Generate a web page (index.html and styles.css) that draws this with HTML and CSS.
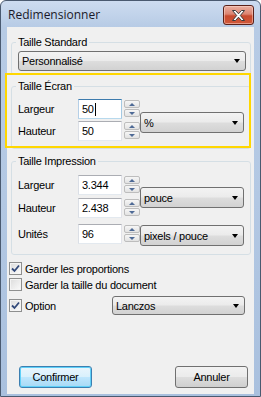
FILE: index.html
```html
<!DOCTYPE html>
<html lang="fr">
<head>
<meta charset="utf-8">
<title>Redimensionner</title>
<link rel="stylesheet" href="styles.css">
</head>
<body>
<div class="window">
  <div class="titlebar">
    <span class="title">Redimensionner</span>
    <div class="close">
      <svg width="13" height="11" viewBox="0 0 13 11"><polygon points="0.5,0.5 3.5,0.5 6.5,3.8 9.5,0.5 12.5,0.5 8.3,5.5 12.5,10.5 9.5,10.5 6.5,7.2 3.5,10.5 0.5,10.5 4.7,5.5" fill="#fff" stroke="#3b3b3b" stroke-width="1" stroke-linejoin="round"/></svg>
    </div>
  </div>
  <div class="client">
    <fieldset class="group g1">
      <legend>Taille Standard</legend>
      <div class="combo wide"><span>Personnalisé</span><i class="arrow"></i></div>
    </fieldset>

    <div class="hl-wrap">
      <fieldset class="group g2">
        <legend>Taille Écran</legend>
        <div class="grid grid2">
          <span class="lbl">Largeur</span>
          <div class="field focus">50<span class="caret"></span></div>
          <div class="spin"><b><i class="up"></i></b><b><i class="down"></i></b></div>
          <div class="combo unit u-pct"><span>%</span><i class="arrow"></i></div>
          <span class="lbl">Hauteur</span>
          <div class="field">50</div>
          <div class="spin"><b><i class="up"></i></b><b><i class="down"></i></b></div>
        </div>
      </fieldset>
      <div class="highlight"></div>
    </div>

    <fieldset class="group g3">
      <legend>Taille Impression</legend>
      <div class="grid grid3">
        <span class="lbl r1">Largeur</span>
        <div class="field r1">3.344</div>
        <div class="spin r1"><b><i class="up"></i></b><b><i class="down"></i></b></div>
        <div class="combo unit u-pouce"><span>pouce</span><i class="arrow"></i></div>
        <span class="lbl r2">Hauteur</span>
        <div class="field r2">2.438</div>
        <div class="spin r2"><b><i class="up"></i></b><b><i class="down"></i></b></div>
        <span class="lbl r3">Unités</span>
        <div class="field r3">96</div>
        <div class="spin r3"><b><i class="up"></i></b><b><i class="down"></i></b></div>
        <div class="combo unit u-ppi"><span>pixels / pouce</span><i class="arrow"></i></div>
      </div>
    </fieldset>

    <div class="checks">
      <div class="chk-row">
        <span class="box checked"><svg width="9" height="9" viewBox="0 0 9 9"><path d="M1 4.5 L3.5 7 L8 1.5" fill="none" stroke="#32497a" stroke-width="1.8"/></svg></span>
        <span>Garder les proportions</span>
      </div>
      <div class="chk-row">
        <span class="box"></span>
        <span>Garder la taille du document</span>
      </div>
      <div class="chk-row opt">
        <span class="box checked"><svg width="9" height="9" viewBox="0 0 9 9"><path d="M1 4.5 L3.5 7 L8 1.5" fill="none" stroke="#32497a" stroke-width="1.8"/></svg></span>
        <span class="opt-lbl">Option</span>
        <div class="combo lanczos"><span>Lanczos</span><i class="arrow"></i></div>
      </div>
    </div>

    <div class="buttons">
      <div class="btn default">Confirmer</div>
      <div class="btn">Annuler</div>
    </div>
  </div>
</div>
</body>
</html>
```

FILE: styles.css
```css
html, body {
  margin: 0;
  padding: 0;
  background: #ffffff;
}
body {
  font-family: "Liberation Sans", Arial, sans-serif;
  font-size: 11px;
  letter-spacing: -0.25px;
  color: #000;
}
.window {
  width: 261px;
  height: 397px;
  box-sizing: border-box;
  border: 1px solid #4a5a70;
  border-radius: 6px 6px 0 0;
  background: linear-gradient(#cddcf0, #b7cbe5 26px, #b3c8e3 200px, #a9c0de);
  display: flex;
  flex-direction: column;
  overflow: hidden;
}
.titlebar {
  height: 26px;
  flex: none;
  display: flex;
  justify-content: space-between;
  align-items: flex-start;
  padding: 0 6px 0 7px;
}
.title {
  font-family: "Open Sans", sans-serif;
  font-size: 12px;
  letter-spacing: 0;
  line-height: 16px;
  margin-top: 6px;
  color: #1a1a2a;
}
.close {
  margin-top: 4px;
  width: 31px;
  height: 20px;
  box-sizing: border-box;
  border: 1px solid #5a2119;
  border-radius: 3px;
  background: linear-gradient(#eab0a2, #dc8470 45%, #c84a2e 55%, #d0583a);
  box-shadow: inset 0 0 0 1px rgba(255, 220, 210, 0.5);
  display: flex;
  align-items: center;
  justify-content: center;
}
.close svg { display: block; }

.client {
  flex: 1;
  margin: 0 6px 2px 6px;
  background: #f0f0f0;
  padding: 0 3px 6px 4px;
  display: flex;
  flex-direction: column;
  border-left: 0;
}

.group {
  margin: 0;
  padding: 0 4px 3px 6px;
  border: 1px solid #d5dfe5;
  border-radius: 3px;
  min-width: 0;
  box-shadow: inset 0 0 0 0 #fff;
}
.group legend {
  padding: 0 2px;
  margin-left: -2px;
  line-height: 13px;
}
.g1 { margin-top: 9px; padding-top: 2px; padding-bottom: 3px; }
.hl-wrap { position: relative; margin-top: 5px; }
.g2 { padding-top: 6px; padding-bottom: 7px; }
.g3 { margin-top: 6px; padding-top: 7px; padding-bottom: 10px; }

.highlight {
  position: absolute;
  left: -6px;
  top: -7px;
  right: 0;
  bottom: 1px;
  border: 2px solid #ffd700;
  pointer-events: none;
}

.combo {
  box-sizing: border-box;
  height: 20px;
  border: 1px solid #707070;
  border-radius: 3px;
  background: linear-gradient(#f3f3f3, #ebebeb 48%, #dddddd 52%, #d2d2d2);
  display: flex;
  align-items: center;
  padding-left: 3px;
}
.combo .arrow {
  margin-left: auto;
  margin-right: 5px;
  width: 0;
  height: 0;
  border-top: 4px solid #000;
  border-left: 3.5px solid transparent;
  border-right: 3.5px solid transparent;
}
.wide { width: 228px; }

.grid {
  display: grid;
  grid-template-columns: 60px 45px 17px 104px;
  column-gap: 0;
}
.grid .field { margin-right: 1px; }
.grid .spin { margin-left: 1px; }
.grid2 { grid-template-rows: 20px 20px; row-gap: 2px; }
.grid2 .lbl, .grid2 .field, .grid2 .spin { grid-column: auto; }
.u-pct { grid-column: 4; grid-row: 1 / 3; align-self: start; margin-top: 13px; height: 21px; }

.grid3 { grid-template-rows: 20px 20px 20px; row-gap: 3px 6px; }
.grid3 { grid-template-rows: 20px 3px 20px 6px 20px; row-gap: 0; }
.grid3 .r1 { grid-row: 1; }
.grid3 .r2 { grid-row: 3; }
.grid3 .r3 { grid-row: 5; }
.u-pouce { grid-column: 4; grid-row: 1 / 4; align-self: start; margin-top: 12px; height: 21px; }
.u-ppi { grid-column: 4; grid-row: 5; align-self: start; margin-top: 1px; height: 21px; }

.lbl { display: flex; align-items: center; }

.field {
  box-sizing: border-box;
  height: 20px;
  background: #fff;
  border: 1px solid;
  border-color: #abadb3 #e2e3ea #e3e9ef #dbdfe6;
  padding-left: 3px;
  display: flex;
  align-items: center;
}
.field.focus {
  border-color: #3d7bad #a4c9e3 #b7d9ed #b5cfe7;
}
.caret {
  width: 1px;
  height: 13px;
  background: #000;
  margin-left: 1px;
}

.spin {
  display: flex;
  flex-direction: column;
  gap: 1px;
  padding: 1px 0 2px;
  box-sizing: border-box;
  height: 20px;
}
.spin b {
  flex: 1;
  box-sizing: border-box;
  border: 1px solid #bdbdbd;
  border-radius: 2px;
  background: linear-gradient(#f6f6f6, #e2e2e2);
  display: flex;
  align-items: center;
  justify-content: center;
}
.spin i {
  width: 0;
  height: 0;
  border-left: 3px solid transparent;
  border-right: 3px solid transparent;
}
.spin i.up { border-bottom: 3px solid #4e6a96; }
.spin i.down { border-top: 3px solid #4e6a96; }

.checks {
  margin-top: 7px;
  margin-left: -2px;
  display: flex;
  flex-direction: column;
  gap: 3px;
}
.chk-row {
  display: flex;
  align-items: center;
  height: 13px;
  gap: 3px;
}
.chk-row.opt {
  height: 19px;
  margin-top: 2px;
  align-items: center;
}
.box {
  width: 13px;
  height: 13px;
  box-sizing: border-box;
  border: 1px solid #8e8f8f;
  background: linear-gradient(135deg, #dcdcdc, #fbfbfb);
  box-shadow: inset 0 0 0 1px #f4f4f4;
  display: flex;
  align-items: center;
  justify-content: center;
  flex: none;
}
.box svg { display: block; }
.opt-lbl { width: 84px; }
.lanczos { width: 133px; height: 19px; }

.buttons {
  margin-top: auto;
  display: flex;
  justify-content: space-between;
  padding: 0 3px 0 8px;
}
.btn {
  width: 73px;
  height: 22px;
  box-sizing: border-box;
  border: 1px solid #707070;
  border-radius: 3px;
  background: linear-gradient(#f2f2f2, #ebebeb 48%, #dddddd 52%, #cfcfcf);
  display: flex;
  align-items: center;
  justify-content: center;
}
.btn.default {
  border-color: #3c7fb1;
  background: linear-gradient(#eaf6fd, #d9f0fc 48%, #bee6fd 52%, #a7d9f5);
  box-shadow: inset 0 0 0 1px #5fd0f8;
}
```
